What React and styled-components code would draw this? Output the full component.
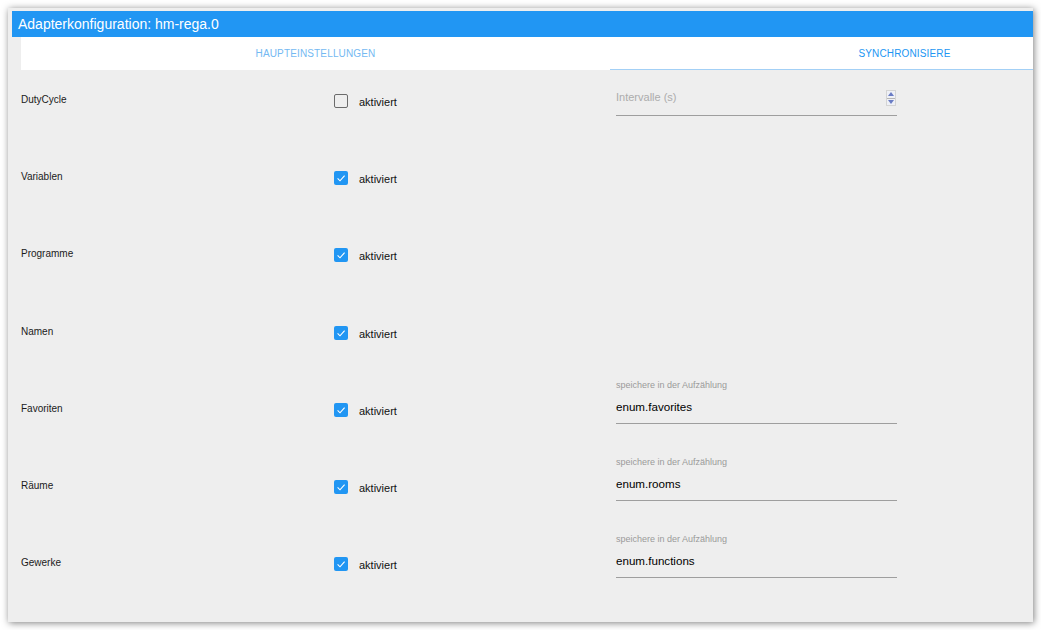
import React from 'react';
import styled, { createGlobalStyle } from 'styled-components';

const Global = createGlobalStyle`
    html, body{
        margin: 0;
        padding: 0;
        background: #ffffff;
        font-family: "Liberation Sans", Arial, sans-serif;
    }
`;

const Page = styled.div`
    width: 1041px;
    height: 630px;
    padding: 8px 0 0 8px;
    box-sizing: border-box;
    overflow: hidden;
`;

const Dialog = styled.div`
    width: 1025px;
    height: 614px;
    box-sizing: border-box;
    padding: 3px 0 0 4px;
    background: #eeeeee;
    box-shadow: 1px 1px 7px rgba(0, 0, 0, 0.5);
    overflow: hidden;
    display: flex;
    flex-direction: column;
`;

const TitleBar = styled.div`
    height: 26px;
    background: #2196f3;
    color: #ffffff;
    font-size: 14px;
    line-height: 26px;
    padding-left: 6px;
    flex-shrink: 0;
`;

const Body = styled.div`
    padding-left: 9px;
    display: flex;
    flex-direction: column;
`;

const Tabs = styled.div`
    display: flex;
    height: 33px;
    flex-shrink: 0;
`;

const Tab = styled.div`
    flex: 0 0 589px;
    height: 33px;
    box-sizing: border-box;
    background: #ffffff;
    display: flex;
    align-items: center;
    justify-content: center;
    font-size: 10px;
    letter-spacing: 0.15px;
    color: ${p => (p.$active ? '#2196f3' : '#74b9f2')};
    border-bottom: 1px solid ${p => (p.$active ? '#a3d0f6' : '#ffffff')};
`;

const Row = styled.div`
    display: flex;
    height: 77.2px;
`;

const LeftCell = styled.div`
    width: 589px;
    display: flex;
    align-items: flex-start;
    padding-top: 24px;
    box-sizing: border-box;
`;

const Label = styled.div`
    width: 313px;
    font-size: 10px;
    line-height: 12px;
    color: #1a1a1a;
`;

const CheckWrap = styled.label`
    display: flex;
    align-items: center;
    gap: 11px;
    margin-top: -1px;
    font-size: 11px;
    color: #111111;
`;

const Box = styled.span`
    width: 14px;
    height: 14px;
    box-sizing: border-box;
    border-radius: 2px;
    display: flex;
    align-items: center;
    justify-content: center;
    background: ${p => (p.$checked ? '#2196f3' : 'transparent')};
    border: ${p => (p.$checked ? 'none' : '1px solid #6b6b6b')};
`;

const CheckText = styled.span`
    padding-top: 2px;
    line-height: 14px;
`;

const RightCell = styled.div`
    width: 281px;
    margin-left: 6px;
`;

const Caption = styled.div`
    height: 12px;
    padding-top: 1px;
    box-sizing: border-box;
    font-size: 9px;
    line-height: 11px;
    color: #9a9a9a;
`;

const InputBox = styled.div`
    height: ${p => (p.$placeholder ? '34px' : '33px')};
    padding-bottom: ${p => (p.$placeholder ? '4px' : '1px')};
    box-sizing: border-box;
    display: flex;
    align-items: center;
    justify-content: space-between;
    border-bottom: 1px solid #9e9e9e;
    font-size: ${p => (p.$placeholder ? '11px' : '11.6px')};
    color: ${p => (p.$placeholder ? '#acacac' : '#000000')};
`;

const Spinner = styled.div`
    width: 10px;
    height: 16px;
    margin-right: 1px;
    margin-top: 3px;
    background: #ffffff;
    border: 1px solid #d4d4d4;
    box-sizing: border-box;
    display: flex;
    flex-direction: column;
`;

const SpinHalf = styled.div`
    flex: 1;
    display: flex;
    align-items: center;
    justify-content: center;
    background: #eef0f6;
    & + &{
        border-top: 1px solid #b5b5b5;
    }
`;

const Check = ({ checked }) => (
    <CheckWrap>
        <Box $checked={checked}>
            {checked && (
                <svg width="14" height="14" viewBox="0 0 14 14">
                    <polyline points="3.6,7.4 6,9.8 10.6,4.6" fill="none" stroke="#ffffff" strokeWidth="1.1" />
                </svg>
            )}
        </Box>
        <CheckText>aktiviert</CheckText>
    </CheckWrap>
);

const rows = [
    { name: 'DutyCycle', checked: false, field: 'interval' },
    { name: 'Variablen', checked: true },
    { name: 'Programme', checked: true },
    { name: 'Namen', checked: true },
    { name: 'Favoriten', checked: true, field: 'enum.favorites' },
    { name: 'Räume', checked: true, field: 'enum.rooms' },
    { name: 'Gewerke', checked: true, field: 'enum.functions' },
];

const App = () => {
    return (
        <Page>
            <Global />
            <Dialog>
                <TitleBar>Adapterkonfiguration: hm-rega.0</TitleBar>
                <Body>
                    <Tabs>
                        <Tab>HAUPTEINSTELLUNGEN</Tab>
                        <Tab $active>SYNCHRONISIERE</Tab>
                    </Tabs>
                    {rows.map(r => (
                        <Row key={r.name}>
                            <LeftCell>
                                <Label>{r.name}</Label>
                                <Check checked={r.checked} />
                            </LeftCell>
                            <RightCell>
                                {r.field === 'interval' && (
                                    <>
                                        <Caption />
                                        <InputBox $placeholder>
                                            <span>Intervalle (s)</span>
                                            <Spinner>
                                                <SpinHalf>
                                                    <svg width="6" height="4" viewBox="0 0 6 4"><polygon points="0,4 3,0 6,4" fill="#6a7cc4" /></svg>
                                                </SpinHalf>
                                                <SpinHalf>
                                                    <svg width="6" height="4" viewBox="0 0 6 4"><polygon points="0,0 6,0 3,4" fill="#6a7cc4" /></svg>
                                                </SpinHalf>
                                            </Spinner>
                                        </InputBox>
                                    </>
                                )}
                                {r.field && r.field !== 'interval' && (
                                    <>
                                        <Caption>speichere in der Aufzählung</Caption>
                                        <InputBox>{r.field}</InputBox>
                                    </>
                                )}
                            </RightCell>
                        </Row>
                    ))}
                </Body>
            </Dialog>
        </Page>
    );
};

export default App;
